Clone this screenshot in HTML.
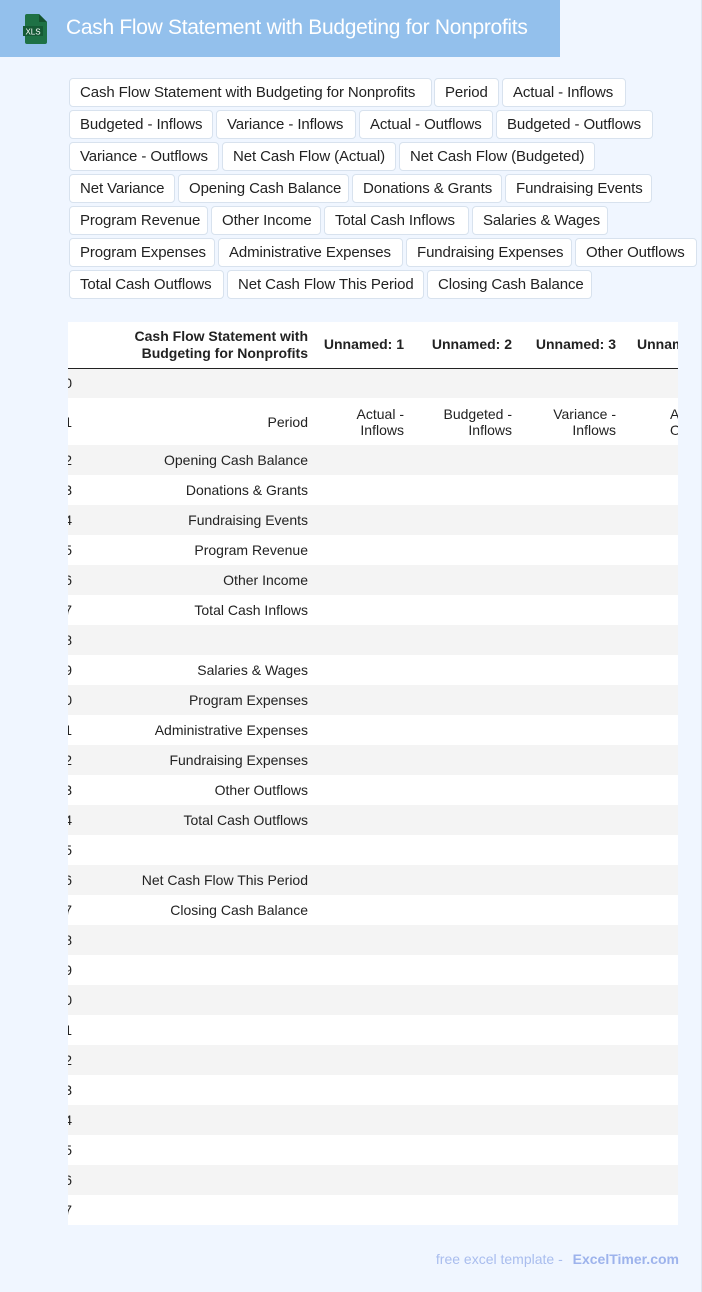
<!DOCTYPE html>
<html><head><meta charset="utf-8"><style>
*{margin:0;padding:0;box-sizing:border-box}
body{width:702px;height:1292px;background:#f0f6ff;font-family:"Liberation Sans",sans-serif;position:relative;overflow:hidden;border-right:1px solid #dfe6ef}
.hdr{position:absolute;left:0;top:0;width:560px;height:57px;background:#93c0ec}
.hdr .t{position:absolute;left:66px;top:16px;color:#fff;font-size:21px;letter-spacing:-0.3px;white-space:nowrap}
.tag{position:absolute;height:29px;background:#fff;border:1px solid #d8e2ee;border-radius:4px;font-size:15px;color:#222;line-height:27px;text-align:left;padding-left:10px;white-space:nowrap;letter-spacing:-0.1px;overflow:visible}
.tb{position:absolute;left:68px;top:322px;width:610px;height:903px;overflow:hidden;background:#fff}
table{position:absolute;left:-36px;top:0;border-collapse:collapse;font-size:14px;color:#222;table-layout:fixed;width:794px}
td,th{padding:0 10px 0 0;text-align:right;white-space:nowrap;vertical-align:middle;overflow:hidden}
td:first-child{padding-right:0}
th{font-weight:bold;height:46px;border-bottom:1px solid #222;line-height:17px}
td{height:30px}
tr.g td{background:#f4f4f4}
.foot{position:absolute;right:22px;top:1251px;font-size:14px;color:#a9bdee}
.foot b{color:#9db3ec;margin-left:6px}
</style></head><body>
<div class="hdr">
<svg style="position:absolute;left:23px;top:14px" width="26" height="30" viewBox="0 0 26 30"><path d="M4 0h12l8 8v20a2 2 0 0 1-2 2H4a2 2 0 0 1-2-2V2a2 2 0 0 1 2-2z" fill="#1e7145"/><path d="M16 0v8h8z" fill="#15532f"/><rect x="0" y="12" width="20" height="10" fill="#155a35"/><text x="10" y="20.5" font-size="8" fill="#fff" text-anchor="middle" font-family="Liberation Sans">XLS</text></svg>
<div class="t">Cash Flow Statement with Budgeting for Nonprofits</div>
</div>

<div class="tag" style="left:69px;top:78px;width:363px">Cash Flow Statement with Budgeting for Nonprofits</div>
<div class="tag" style="left:434px;top:78px;width:65px">Period</div>
<div class="tag" style="left:502px;top:78px;width:124px">Actual - Inflows</div>
<div class="tag" style="left:69px;top:110px;width:144px">Budgeted - Inflows</div>
<div class="tag" style="left:216px;top:110px;width:140px">Variance - Inflows</div>
<div class="tag" style="left:359px;top:110px;width:134px">Actual - Outflows</div>
<div class="tag" style="left:496px;top:110px;width:157px">Budgeted - Outflows</div>
<div class="tag" style="left:69px;top:142px;width:150px">Variance - Outflows</div>
<div class="tag" style="left:222px;top:142px;width:174px">Net Cash Flow (Actual)</div>
<div class="tag" style="left:399px;top:142px;width:196px">Net Cash Flow (Budgeted)</div>
<div class="tag" style="left:69px;top:174px;width:106px">Net Variance</div>
<div class="tag" style="left:178px;top:174px;width:171px">Opening Cash Balance</div>
<div class="tag" style="left:352px;top:174px;width:150px">Donations &amp; Grants</div>
<div class="tag" style="left:505px;top:174px;width:147px">Fundraising Events</div>
<div class="tag" style="left:69px;top:206px;width:139px">Program Revenue</div>
<div class="tag" style="left:211px;top:206px;width:110px">Other Income</div>
<div class="tag" style="left:324px;top:206px;width:145px">Total Cash Inflows</div>
<div class="tag" style="left:472px;top:206px;width:136px">Salaries &amp; Wages</div>
<div class="tag" style="left:69px;top:238px;width:146px">Program Expenses</div>
<div class="tag" style="left:218px;top:238px;width:185px">Administrative Expenses</div>
<div class="tag" style="left:406px;top:238px;width:166px">Fundraising Expenses</div>
<div class="tag" style="left:575px;top:238px;width:122px">Other Outflows</div>
<div class="tag" style="left:69px;top:270px;width:155px">Total Cash Outflows</div>
<div class="tag" style="left:227px;top:270px;width:197px">Net Cash Flow This Period</div>
<div class="tag" style="left:427px;top:270px;width:165px">Closing Cash Balance</div>

<div class="tb"><table>
<colgroup><col style="width:40px"><col style="width:246px"><col style="width:96px"><col style="width:108px"><col style="width:104px"><col style="width:200px"></colgroup>
<tr><th></th><th>Cash Flow Statement with<br>Budgeting for Nonprofits</th><th>Unnamed: 1</th><th>Unnamed: 2</th><th>Unnamed: 3</th><th style="text-align:left;padding-left:11px">Unnamed: 4</th></tr>
<tr class="g"><td>0</td><td></td><td></td><td></td><td></td><td></td></tr>
<tr><td style="height:47px">1</td><td>Period</td><td style="line-height:16px">Actual -<br>Inflows</td><td style="line-height:16px">Budgeted -<br>Inflows</td><td style="line-height:16px">Variance -<br>Inflows</td><td style="text-align:left;padding-left:44px;line-height:16px">Actual -<br>Outflows</td></tr>
<tr class="g"><td>2</td><td>Opening Cash Balance</td><td></td><td></td><td></td><td></td></tr>
<tr><td>3</td><td>Donations &amp; Grants</td><td></td><td></td><td></td><td></td></tr>
<tr class="g"><td>4</td><td>Fundraising Events</td><td></td><td></td><td></td><td></td></tr>
<tr><td>5</td><td>Program Revenue</td><td></td><td></td><td></td><td></td></tr>
<tr class="g"><td>6</td><td>Other Income</td><td></td><td></td><td></td><td></td></tr>
<tr><td>7</td><td>Total Cash Inflows</td><td></td><td></td><td></td><td></td></tr>
<tr class="g"><td>8</td><td></td><td></td><td></td><td></td><td></td></tr>
<tr><td>9</td><td>Salaries &amp; Wages</td><td></td><td></td><td></td><td></td></tr>
<tr class="g"><td>10</td><td>Program Expenses</td><td></td><td></td><td></td><td></td></tr>
<tr><td>11</td><td>Administrative Expenses</td><td></td><td></td><td></td><td></td></tr>
<tr class="g"><td>12</td><td>Fundraising Expenses</td><td></td><td></td><td></td><td></td></tr>
<tr><td>13</td><td>Other Outflows</td><td></td><td></td><td></td><td></td></tr>
<tr class="g"><td>14</td><td>Total Cash Outflows</td><td></td><td></td><td></td><td></td></tr>
<tr><td>15</td><td></td><td></td><td></td><td></td><td></td></tr>
<tr class="g"><td>16</td><td>Net Cash Flow This Period</td><td></td><td></td><td></td><td></td></tr>
<tr><td>17</td><td>Closing Cash Balance</td><td></td><td></td><td></td><td></td></tr>
<tr class="g"><td>18</td><td></td><td></td><td></td><td></td><td></td></tr>
<tr><td>19</td><td></td><td></td><td></td><td></td><td></td></tr>
<tr class="g"><td>20</td><td></td><td></td><td></td><td></td><td></td></tr>
<tr><td>21</td><td></td><td></td><td></td><td></td><td></td></tr>
<tr class="g"><td>22</td><td></td><td></td><td></td><td></td><td></td></tr>
<tr><td>23</td><td></td><td></td><td></td><td></td><td></td></tr>
<tr class="g"><td>24</td><td></td><td></td><td></td><td></td><td></td></tr>
<tr><td>25</td><td></td><td></td><td></td><td></td><td></td></tr>
<tr class="g"><td>26</td><td></td><td></td><td></td><td></td><td></td></tr>
<tr><td>27</td><td></td><td></td><td></td><td></td><td></td></tr>
</table></div>

<div class="foot">free excel template - <b>ExcelTimer.com</b></div>
</body></html>
